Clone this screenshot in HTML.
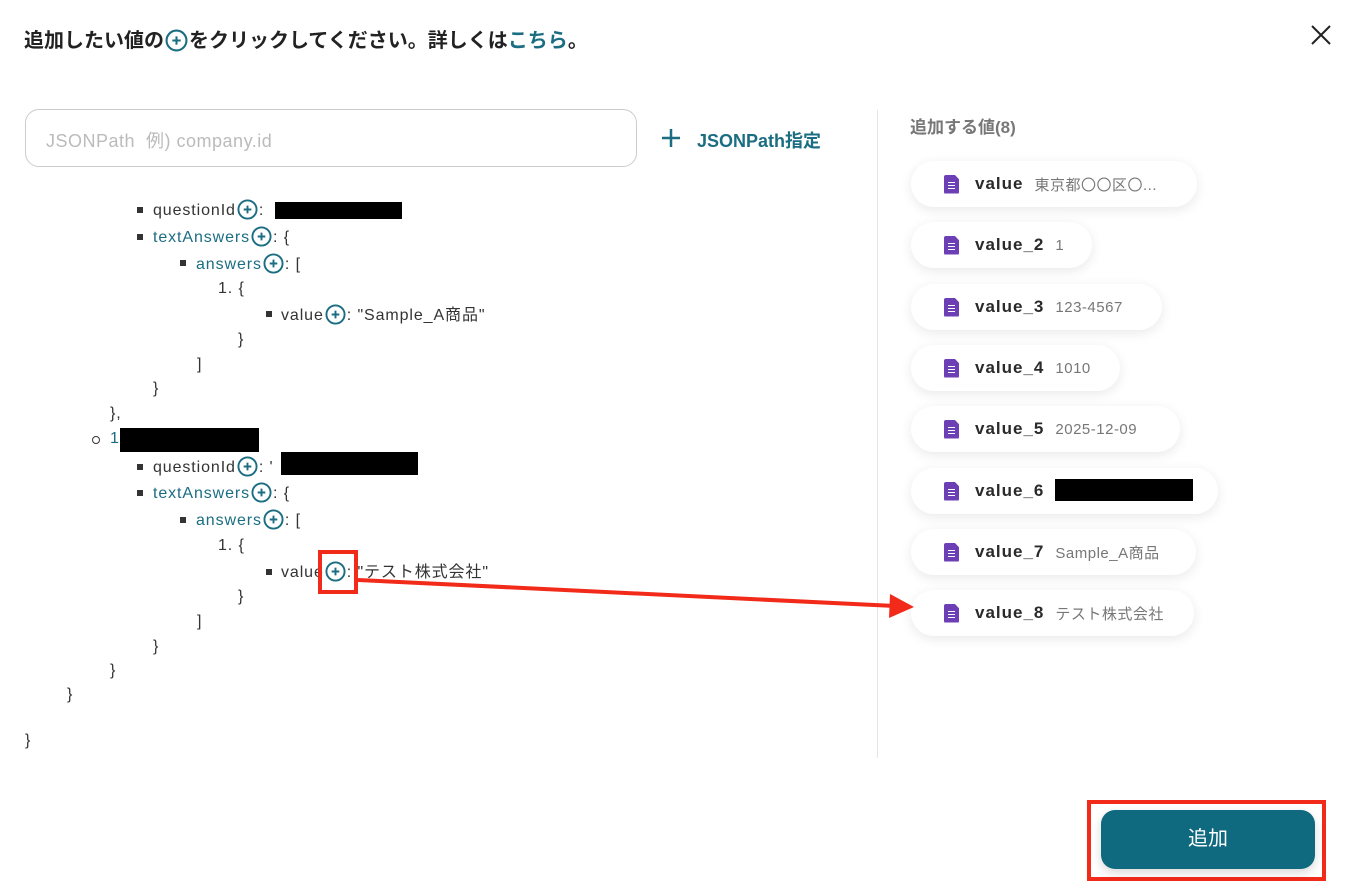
<!DOCTYPE html>
<html><head><meta charset="utf-8"><style>
body{margin:0;width:1350px;height:896px;background:#fff;font-family:"Liberation Sans","Noto Sans CJK JP",sans-serif;position:relative;overflow:hidden;color:#333}
.a{position:absolute;white-space:nowrap}
.t{font-size:16px;line-height:20px;color:#333;letter-spacing:0.9px}
.k{color:#1b6d82}
.p{display:inline-block;width:21px;height:21px;vertical-align:-5px;margin:0 1px}
.sq{position:absolute;width:6px;height:6px;background:#333}
.blk{position:absolute;background:#000}
.chip{position:absolute;left:911px;height:46px;border-radius:23px;background:#fff;box-shadow:0 3px 12px rgba(0,0,0,.09);display:flex;align-items:center;box-sizing:border-box;padding-left:33px}
.ic{width:15px;height:19px;background:#6c3fb5;border-radius:2px;position:relative;margin-right:16px;clip-path:polygon(0 0,70% 0,100% 25%,100% 100%,0 100%)}
.ic i{position:absolute;left:4px;width:7px;height:1.5px;background:#fff}
.lb{font-weight:bold;font-size:17px;color:#2a2a2a;margin-right:11px;letter-spacing:1px}
.vl{font-size:15px;color:#777;letter-spacing:0.5px}
</style></head><body>
<svg width="0" height="0" style="position:absolute"><symbol id="pl" viewBox="0 0 22 22"><circle cx="11" cy="11" r="9.5" fill="none" stroke="#1b6d82" stroke-width="2"/><path d="M7 11H15M11 7V15" stroke="#1b6d82" stroke-width="2"/></symbol></svg>
<div class="a" style="left:24px;top:28px;font-size:20px;font-weight:bold;color:#222;line-height:26px">追加したい値の<svg class="p" style="width:23px;height:23px"><use href="#pl"/></svg>をクリックしてください。詳しくは<span class="k">こちら</span>。</div>
<svg class="a" style="left:1310px;top:24px" width="22" height="22"><path d="M2 2L20 20M20 2L2 20" stroke="#222" stroke-width="2"/></svg>
<div class="a" style="left:25px;top:109px;width:612px;height:58px;border:1px solid #ccc;border-radius:14px;box-sizing:border-box"></div>
<div class="a" style="left:46px;top:127px;font-size:18px;color:#bbb;letter-spacing:0.5px">JSONPath&nbsp; 例) company.id</div>
<svg class="a" style="left:661px;top:128px" width="20" height="20"><path d="M10 1V19M1 10H19" stroke="#1b6d82" stroke-width="2.5"/></svg>
<div class="a" style="left:697px;top:127px;font-size:18px;font-weight:bold;color:#1b6d82">JSONPath指定</div>
<div class="a" style="left:877px;top:110px;width:1px;height:648px;background:#e5e5e5"></div>

<div class="sq" style="left:137px;top:207px"></div><div class="a t" style="left:153px;top:199px">questionId<svg class="p"><use href="#pl"/></svg>:</div>
<div class="blk" style="left:275px;top:202px;width:127px;height:17px"></div>
<div class="sq" style="left:137px;top:234px"></div><div class="a t" style="left:153px;top:226px"><span class="k">textAnswers</span><svg class="p"><use href="#pl"/></svg>: {</div>
<div class="sq" style="left:180px;top:260px"></div><div class="a t" style="left:196px;top:253px"><span class="k">answers</span><svg class="p"><use href="#pl"/></svg>: [</div>
<div class="a t" style="left:218px;top:279px">1. {</div>
<div class="sq" style="left:266px;top:311px"></div><div class="a t" style="left:281px;top:304px">value<svg class="p"><use href="#pl"/></svg>: "Sample_A商品"</div>
<div class="a t" style="left:238px;top:330px">}</div>
<div class="a t" style="left:197px;top:355px">]</div>
<div class="a t" style="left:153px;top:379px">}</div>
<div class="a t" style="left:110px;top:404px">},</div>
<div class="a" style="left:92px;top:436px;width:6px;height:6px;border:1px solid #333;border-radius:50%"></div>
<div class="a t k" style="left:110px;top:429px">14</div>
<div class="blk" style="left:120px;top:428px;width:139px;height:24px"></div>
<div class="sq" style="left:137px;top:464px"></div><div class="a t" style="left:153px;top:456px">questionId<svg class="p"><use href="#pl"/></svg>: '</div>
<div class="blk" style="left:281px;top:452px;width:137px;height:23px"></div>
<div class="sq" style="left:137px;top:490px"></div><div class="a t" style="left:153px;top:482px"><span class="k">textAnswers</span><svg class="p"><use href="#pl"/></svg>: {</div>
<div class="sq" style="left:180px;top:517px"></div><div class="a t" style="left:196px;top:509px"><span class="k">answers</span><svg class="p"><use href="#pl"/></svg>: [</div>
<div class="a t" style="left:218px;top:536px">1. {</div>
<div class="sq" style="left:266px;top:569px"></div><div class="a t" style="left:281px;top:561px">value<svg class="p"><use href="#pl"/></svg>: "テスト株式会社"</div>
<div class="a t" style="left:238px;top:587px">}</div>
<div class="a t" style="left:197px;top:612px">]</div>
<div class="a t" style="left:153px;top:637px">}</div>
<div class="a t" style="left:110px;top:661px">}</div>
<div class="a t" style="left:67px;top:685px">}</div>
<div class="a t" style="left:25px;top:731px">}</div>

<div class="a" style="left:910px;top:113px;font-size:17px;font-weight:bold;color:#777">追加する値(8)</div>
<div class="chip" style="top:161px;width:286px"><div class="ic"><i style="top:7px"></i><i style="top:10px"></i><i style="top:13px"></i></div><span class="lb">value</span><span class="vl">東京都〇〇区〇...</span></div>
<div class="chip" style="top:222px;width:181px"><div class="ic"><i style="top:7px"></i><i style="top:10px"></i><i style="top:13px"></i></div><span class="lb">value_2</span><span class="vl">1</span></div>
<div class="chip" style="top:284px;width:251px"><div class="ic"><i style="top:7px"></i><i style="top:10px"></i><i style="top:13px"></i></div><span class="lb">value_3</span><span class="vl">123-4567</span></div>
<div class="chip" style="top:345px;width:209px"><div class="ic"><i style="top:7px"></i><i style="top:10px"></i><i style="top:13px"></i></div><span class="lb">value_4</span><span class="vl">1010</span></div>
<div class="chip" style="top:406px;width:269px"><div class="ic"><i style="top:7px"></i><i style="top:10px"></i><i style="top:13px"></i></div><span class="lb">value_5</span><span class="vl">2025-12-09</span></div>
<div class="chip" style="top:468px;width:307px"><div class="ic"><i style="top:7px"></i><i style="top:10px"></i><i style="top:13px"></i></div><span class="lb">value_6</span></div>
<div class="blk" style="left:1055px;top:479px;width:138px;height:22px"></div>
<div class="chip" style="top:529px;width:285px"><div class="ic"><i style="top:7px"></i><i style="top:10px"></i><i style="top:13px"></i></div><span class="lb">value_7</span><span class="vl">Sample_A商品</span></div>
<div class="chip" style="top:590px;width:283px"><div class="ic"><i style="top:7px"></i><i style="top:10px"></i><i style="top:13px"></i></div><span class="lb">value_8</span><span class="vl">テスト株式会社</span></div>

<div class="a" style="left:318px;top:550px;width:40px;height:44px;border:4px solid #f22a1a;box-sizing:border-box"></div>
<svg class="a" style="left:0;top:0" width="1350" height="896"><line x1="358" y1="580" x2="895" y2="606" stroke="#f22a1a" stroke-width="4"/><polygon points="914,607 890,594 889,618" fill="#f22a1a"/></svg>

<div class="a" style="left:1087px;top:800px;width:239px;height:81px;border:4px solid #f22a1a;box-sizing:border-box"></div>
<div class="a" style="left:1101px;top:810px;width:214px;height:59px;background:#0f6a80;border-radius:14px;box-shadow:0 4px 10px rgba(0,0,0,.15);color:#fff;font-size:20px;text-align:center;line-height:59px">追加</div>
</body></html>
